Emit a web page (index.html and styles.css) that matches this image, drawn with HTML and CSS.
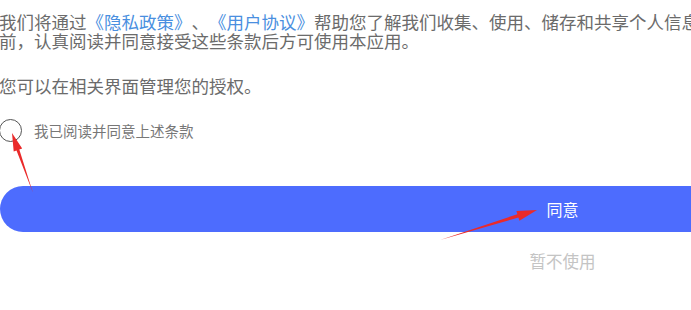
FILE: index.html
```html
<!DOCTYPE html>
<html lang="zh-CN">
<head>
<meta charset="utf-8">
<title>用户协议</title>
<link rel="stylesheet" href="styles.css">
</head>
<body>
<div class="page">
  <p class="intro">我们将通过<a class="link">《隐私政策》</a>、<a class="link">《用户协议》</a>帮助您了解我们收集、使用、储存和共享个人信息前，认真阅读并同意接受这些条款后方可使用本应用。</p>
  <p class="note">您可以在相关界面管理您的授权。</p>
  <label class="check">
    <span class="circle"></span>
    <span class="check-label">我已阅读并同意上述条款</span>
  </label>
  <button class="agree">同意</button>
  <div class="decline">暂不使用</div>
</div>
<svg class="marks" width="691" height="310" viewBox="0 0 691 310">
  <polygon fill="#ea2a2a" points="33,193 19.3,149.5 22.2,148.5 12,133 13.7,151.5 16.5,150.5"/>
  <polygon fill="#ea2a2a" points="440,240 518.4,217.6 519.4,220.7 537,210 516.4,211.1 517.4,214.2"/>
</svg>
</body>
</html>
```
FILE: styles.css
```css
html, body {
  margin: 0;
  padding: 0;
  background: #fff;
  overflow: hidden;
}
body {
  width: 691px;
  height: 310px;
  position: relative;
  font-family: "Noto Sans CJK SC", "Noto Sans", sans-serif;
  text-spacing-trim: space-all;
  font-feature-settings: "halt" 0, "chws" 0;
}
.page {
  width: 1125px;
  display: flex;
  flex-direction: column;
}
.intro {
  width: 706px;
  margin: 12px 0 0 -1px;
  font-size: 17.5px;
  line-height: 19px;
  color: #6b6b6b;
}
.link {
  color: #4a8fe0;
}
.note {
  margin: 26px 0 0 -1px;
  font-size: 17.5px;
  line-height: 19px;
  color: #6b6b6b;
}
.check {
  display: flex;
  align-items: center;
  margin-top: 23px;
  margin-left: -1px;
  height: 24px;
}
.circle {
  width: 23px;
  height: 23px;
  border: 1px solid #555;
  border-radius: 50%;
  box-sizing: border-box;
}
.check-label {
  margin-left: 12px;
  font-size: 14.5px;
  color: #777;
}
.agree {
  margin-top: 44px;
  height: 46px;
  border: none;
  border-radius: 23px;
  background: #4d6cfe;
  color: #fff;
  font-family: inherit;
  font-size: 16px;
  padding: 0;
}
.decline {
  margin-top: 17px;
  text-align: center;
  font-size: 16.5px;
  color: #c4c4c4;
}
.marks {
  position: absolute;
  left: 0;
  top: 0;
  pointer-events: none;
}
```
